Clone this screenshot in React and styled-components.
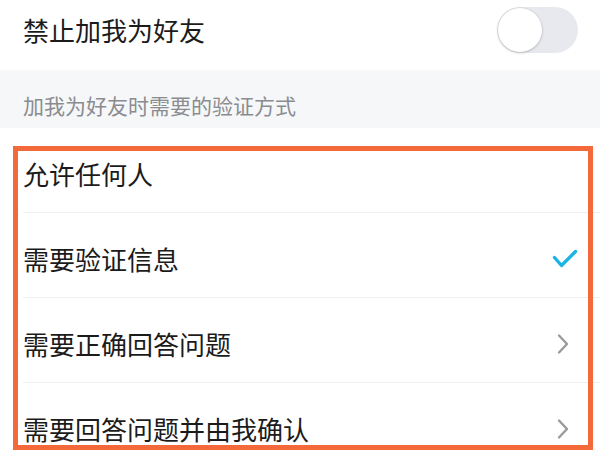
import React from "react";
import styled, { createGlobalStyle } from "styled-components";

const Global = createGlobalStyle`
  html, body { margin: 0; padding: 0; background: #ffffff; }
  body { font-family: "Noto Sans CJK SC", "Noto Sans", sans-serif; overflow: hidden; }
`;

const Page = styled.div`
  position: relative;
  width: 600px;
  height: 450px;
  overflow: hidden;
  background: #ffffff;
`;

const TopRow = styled.div`
  height: 70px;
  box-sizing: border-box;
  padding: 0 22px 10px 23px;
  display: flex;
  align-items: center;
  justify-content: space-between;
`;

const Label = styled.span`
  font-size: 26px;
  color: #1b1b1b;
  line-height: 1;
  letter-spacing: 0;
`;

const Toggle = styled.div`
  width: 81px;
  height: 46px;
  border-radius: 23px;
  background: #e8e9ee;
  display: flex;
  align-items: center;
  padding: 0 1px;
  box-sizing: border-box;
`;

const Knob = styled.div`
  width: 44px;
  height: 44px;
  border-radius: 50%;
  background: #ffffff;
  box-shadow: 0 1px 3px rgba(0, 0, 0, 0.18), 0 0 0 1px rgba(0, 0, 0, 0.04);
`;

const SectionHeader = styled.div`
  height: 58px;
  box-sizing: border-box;
  background: #f6f7f9;
  padding: 0 23px 12px;
  display: flex;
  align-items: flex-end;
`;

const SectionText = styled.span`
  font-size: 21px;
  line-height: 1;
  color: #8b8c90;
`;

const List = styled.div`
  display: flex;
  flex-direction: column;
`;

const Row = styled.div`
  height: 85px;
  box-sizing: border-box;
  margin-left: 23px;
  padding: 8px 22px 0 0;
  display: flex;
  align-items: center;
  justify-content: space-between;
  border-bottom: 1px solid #efeff1;
`;

const Annotation = styled.div`
  position: absolute;
  left: 13px;
  top: 146px;
  width: 580px;
  height: 304px;
  box-sizing: border-box;
  border: 5px solid #f4693a;
  pointer-events: none;
`;

const Check = () => (
  <svg width="26" height="20" viewBox="0 0 26 20">
    <path d="M2.5 8.5 L9.5 16.5 L23.5 2.5" fill="none" stroke="#1db4e4" strokeWidth="3.4" strokeLinecap="round" strokeLinejoin="round" />
  </svg>
);

const Chevron = () => (
  <svg width="14" height="22" viewBox="0 0 14 22" style={{ marginRight: 8 }}>
    <path d="M3 2.5 L11 11 L3 19.5" fill="none" stroke="#9a9a9e" strokeWidth="2.4" strokeLinecap="round" strokeLinejoin="round" />
  </svg>
);

const options = [
  { text: "允许任何人", icon: null },
  { text: "需要验证信息", icon: "check" },
  { text: "需要正确回答问题", icon: "chevron" },
  { text: "需要回答问题并由我确认", icon: "chevron" },
];

export default function App() {
  return (
    <Page>
      <Global />
      <TopRow>
        <Label>禁止加我为好友</Label>
        <Toggle>
          <Knob />
        </Toggle>
      </TopRow>
      <SectionHeader>
        <SectionText>加我为好友时需要的验证方式</SectionText>
      </SectionHeader>
      <List>
        {options.map((o) => (
          <Row key={o.text}>
            <Label>{o.text}</Label>
            {o.icon === "check" && <Check />}
            {o.icon === "chevron" && <Chevron />}
          </Row>
        ))}
      </List>
      <Annotation />
    </Page>
  );
}
